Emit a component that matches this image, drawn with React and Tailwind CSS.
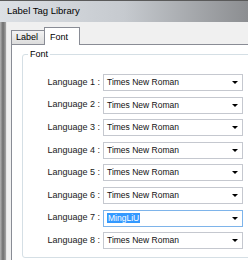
import React from "react";

const fonts = [
  "Times New Roman",
  "Times New Roman",
  "Times New Roman",
  "Times New Roman",
  "Times New Roman",
  "Times New Roman",
  "MingLiU",
  "Times New Roman",
];

function Combo({ value, focused }) {
  return (
    <div
      className={`flex items-center h-[17px] w-[140px] bg-white border pl-[3px] pr-[4px] ${
        focused ? "border-[#7eb4ea]" : "border-[#c5c8cf]"
      }`}
    >
      <span
        className={`flex-1 text-[8.5px] leading-[11px] ${focused ? "" : "text-[#111]"}`}
      >
        {focused ? (
          <span className="bg-[#3399ff] text-white px-px">{value}</span>
        ) : (
          value
        )}
      </span>
      <span className="w-0 h-0 border-l-[3px] border-r-[3px] border-t-[3px] border-l-transparent border-r-transparent border-t-black" />
    </div>
  );
}

export default function App() {
  return (
    <div
      className="w-[248px] h-[260px] overflow-hidden bg-[#f0f0f0] flex flex-col"
      style={{ fontFamily: '"Liberation Sans", Arial, sans-serif' }}
    >
      {/* title bar */}
      <div className="h-[22px] shrink-0 border-t border-[#5a5a5a] bg-gradient-to-r from-[#dce0e5] via-[#c6cacf] to-[#8c8e91] flex items-center pl-[7px]">
        <span className="text-[9.5px] text-black">Label Tag Library</span>
      </div>

      <div className="flex flex-1">
        {/* left frame */}
        <div className="w-[6px] shrink-0 bg-gradient-to-r from-[#b4b4b4] via-[#6e6e6e] to-[#a8a8a8]" />

        <div className="flex-1 flex flex-col border-l border-[#e6e6e6] pl-[4px]">
          {/* tabs */}
          <div className="h-[22px] shrink-0 flex items-end">
            <div className="w-[34px] h-[14px] border border-b-0 border-[#898c95] bg-gradient-to-b from-[#f3f3f3] to-[#dcdcdc] flex items-center pl-[4px] text-[9px] text-black">
              Label
            </div>
            <div className="w-[36px] h-[18px] -ml-px -mb-px relative z-10 border border-b-0 border-[#898c95] bg-white flex items-start pt-[3px] pl-[5px] text-[9px] text-black">
              Font
            </div>
          </div>

          {/* panel */}
          <div className="flex-1 border-t border-l border-[#898c95] bg-white pl-[10px] pt-[9px]">
            <div className="relative w-[240px] h-[204px] border border-[#d5dfe5] rounded-[3px] pt-[19px]">
              <span className="absolute left-[5px] -top-[6px] bg-white px-[2px] text-[9px] leading-[11px] text-black">
                Font
              </span>
              <div className="flex flex-col gap-[5.6px]">
                {fonts.map((f, i) => (
                  <div key={i} className="flex items-center">
                    <span className="w-[80px] pr-[3px] text-right text-[9px] text-[#1a1a1a]">
                      {`Language ${i + 1} :`}
                    </span>
                    <Combo value={f} focused={i === 6} />
                  </div>
                ))}
              </div>
            </div>
          </div>
        </div>
      </div>
    </div>
  );
}
